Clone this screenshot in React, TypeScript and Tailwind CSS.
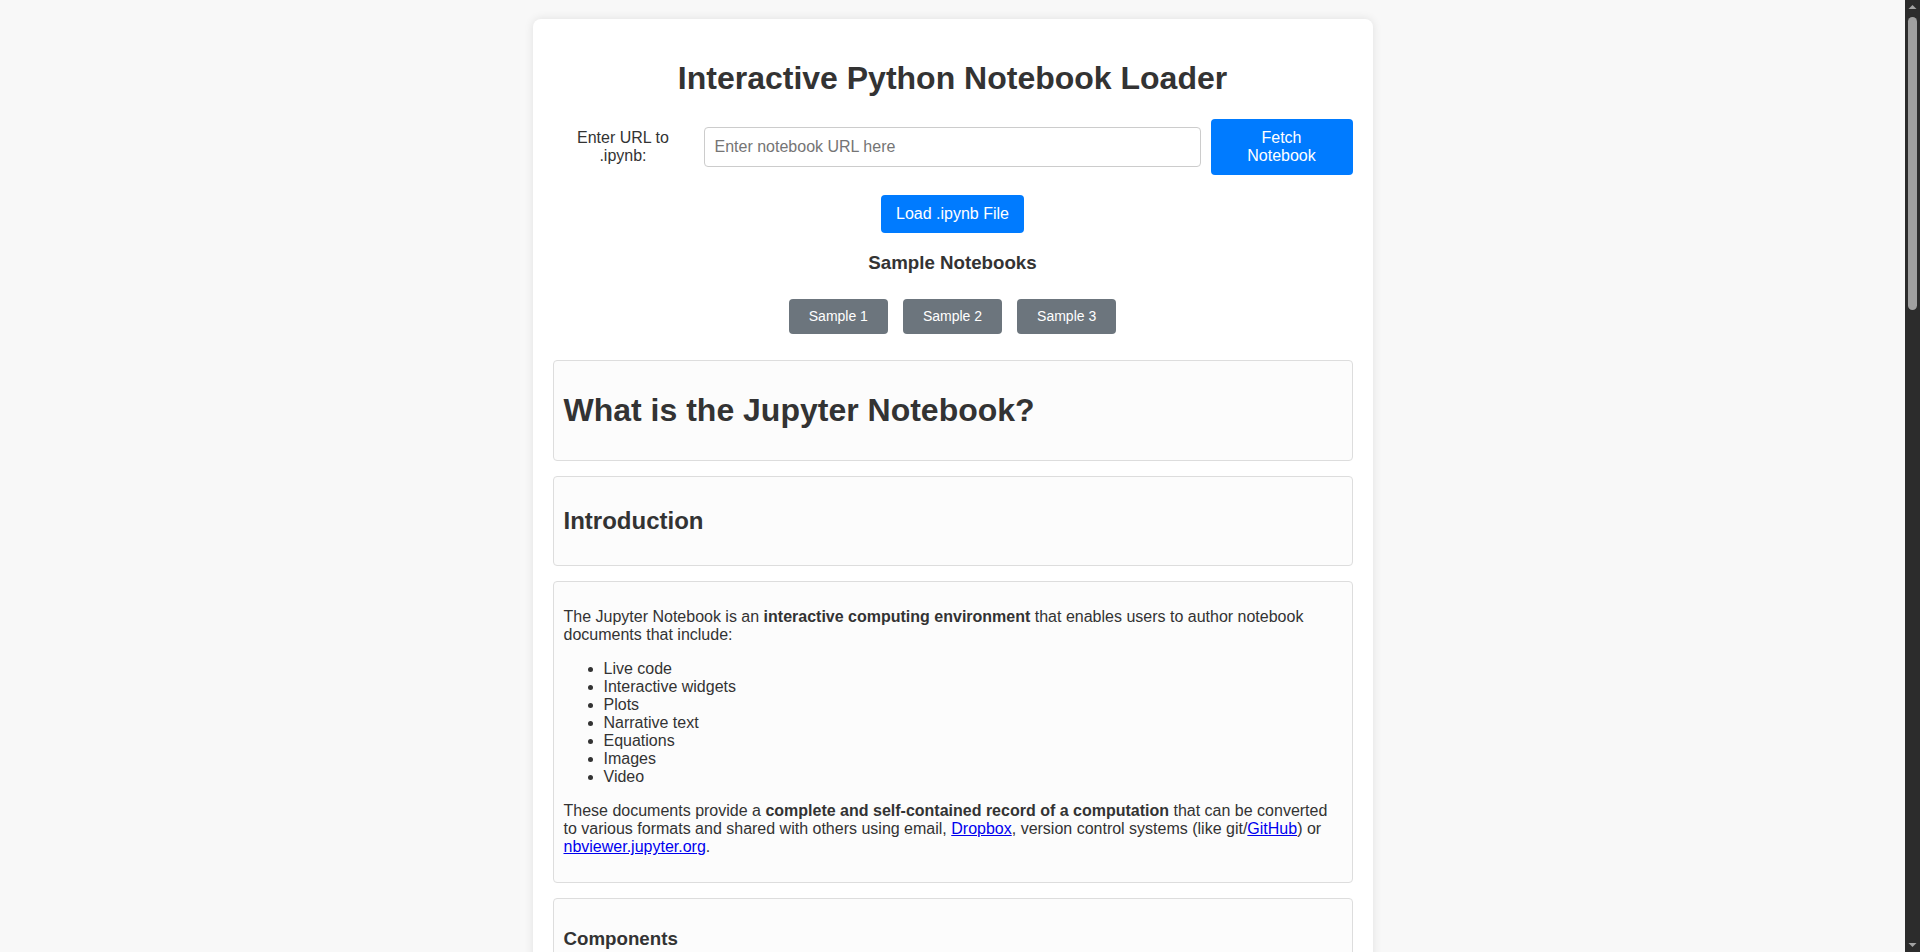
import React from "react";

// Sample notebooks listed under the loader
const samples = ["Sample 1", "Sample 2", "Sample 3"];

const features = [
  "Live code",
  "Interactive widgets",
  "Plots",
  "Narrative text",
  "Equations",
  "Images",
  "Video",
];

function Cell({ children }: { children: React.ReactNode }) {
  return (
    <div className="mb-[15px] rounded-[4px] border border-[#ddd] bg-[#fcfcfc] p-[10px]">
      {children}
    </div>
  );
}

function A({ children }: { children: React.ReactNode }) {
  return (
    <a href="#" className="text-[#0000ee] underline">
      {children}
    </a>
  );
}

// Dark browser scrollbar shown on the right edge of the page
function ScrollBar() {
  return (
    <div className="sticky top-0 flex h-screen w-[15px] shrink-0 flex-col items-center bg-[#2c2c2c]">
      <svg width="9" height="15" viewBox="0 0 9 15" className="shrink-0">
        <path d="M0.5 9 L4.5 5 L8.5 9 Z" fill="#a3a3a3" />
      </svg>
      <div className="mt-[2px] h-[293px] w-[9px] rounded-full bg-[#9f9f9f]" />
      <div className="flex-1" />
      <svg width="9" height="15" viewBox="0 0 9 15" className="shrink-0">
        <path d="M0.5 6 L4.5 10 L8.5 6 Z" fill="#a3a3a3" />
      </svg>
    </div>
  );
}

export default function App() {
  return (
    <div className="flex bg-[#f8f8f8] font-['Liberation_Sans',Arial,sans-serif] text-[16px] leading-[normal] text-[#333]">
      <div className="min-w-0 flex-1 pt-[19px] pb-5">
        <div className="mx-auto w-[840px] rounded-lg bg-white p-5 shadow-[0_0_10px_rgba(0,0,0,0.1)]">
          <h1 className="my-[21.44px] text-center text-[32px] font-bold">
            Interactive Python Notebook Loader
          </h1>

          {/* URL row */}
          <div className="flex items-center gap-[10px]">
            <label className="mx-[10px] w-[121px] shrink-0 text-center">
              Enter URL to .ipynb:
            </label>
            <input
              type="text"
              placeholder="Enter notebook URL here"
              className="h-[40px] min-w-0 flex-1 rounded-[4px] border border-[#ccc] px-[10px] outline-none placeholder:text-[#757575]"
            />
            <button className="w-[142px] shrink-0 rounded-[4px] bg-[#007bff] px-5 py-[10px] text-white">
              Fetch Notebook
            </button>
          </div>

          <div className="mt-5 flex justify-center">
            <button className="rounded-[4px] bg-[#007bff] px-[15.5px] py-[10px] text-white">
              Load .ipynb File
            </button>
          </div>

          <h3 className="mt-[18.72px] mb-[25px] text-center text-[18.72px] font-bold">
            Sample Notebooks
          </h3>

          <div className="flex justify-center gap-[15px]">
            {samples.map((s) => (
              <button
                key={s}
                className="rounded-[4px] bg-[#6c757d] px-5 py-[9.5px] text-[14px] text-white"
              >
                {s}
              </button>
            ))}
          </div>

          {/* Notebook cells */}
          <div className="mt-[26px]">
            <Cell>
              <h1 className="my-[21.44px] text-[32px] font-bold">What is the Jupyter Notebook?</h1>
            </Cell>
            <Cell>
              <h2 className="my-[19.92px] text-[24px] font-bold">Introduction</h2>
            </Cell>
            <Cell>
              <p className="my-4">
                The Jupyter Notebook is an <strong>interactive computing environment</strong> that
                enables users to author notebook documents that include:
              </p>
              <ul className="my-4 list-disc pl-10">
                {features.map((f) => (
                  <li key={f}>{f}</li>
                ))}
              </ul>
              <p className="my-4">
                These documents provide a{" "}
                <strong>complete and self-contained record of a computation</strong> that can be
                converted to various formats and shared with others using email, <A>Dropbox</A>,
                version control systems (like git/<A>GitHub</A>) or <A>nbviewer.jupyter.org</A>.
              </p>
            </Cell>
            <Cell>
              <h3 className="my-[18.72px] text-[18.72px] font-bold">Components</h3>
              <p className="my-4">The Jupyter Notebook combines three components:</p>
              <ul className="my-4 list-disc pl-10">
                <li>
                  <strong>The notebook web application</strong>: An interactive web application
                  for writing and running code interactively and authoring notebook documents.
                </li>
                <li>
                  <strong>Kernels</strong>: Separate processes started by the notebook web
                  application that runs users' code in a given language and returns output back to
                  the notebook web application. The kernel also handles things like computations
                  for interactive widgets, tab completion and introspection.
                </li>
                <li>
                  <strong>Notebook documents</strong>: Self-contained documents that contain a
                  representation of all content visible in the notebook web application, including
                  inputs and outputs of the computations, narrative text, equations, images, and
                  rich media representations of objects. Each notebook document has its own
                  kernel.
                </li>
              </ul>
            </Cell>
            <Cell>
              <h2 className="my-[19.92px] text-[24px] font-bold">Notebook web application</h2>
            </Cell>
            <Cell>
              <p className="my-4">The notebook web application enables users to:</p>
              <ul className="my-4 list-disc pl-10">
                <li>
                  <strong>Edit code in the browser</strong>, with automatic syntax highlighting,
                  indentation, and tab completion/introspection.
                </li>
                <li>
                  <strong>Run code from the browser</strong>, with the results of computations
                  attached to the code which generated them.
                </li>
                <li>
                  See the results of computations with{" "}
                  <strong>rich media representations</strong>, such as HTML, LaTeX, PNG, SVG, PDF,
                  etc.
                </li>
                <li>
                  Create and use <strong>interactive JavaScript widgets</strong>, which bind
                  interactive user interface controls and visualizations to reactive kernel side
                  computations.
                </li>
                <li>
                  Author <strong>narrative text</strong> using the <A>Markdown</A> markup language.
                </li>
                <li>
                  Include mathematical equations using <strong>LaTeX syntax in Markdown</strong>,
                  which are rendered in-browser by <A>MathJax</A>.
                </li>
              </ul>
            </Cell>
            <Cell>
              <h2 className="my-[19.92px] text-[24px] font-bold">Kernels</h2>
            </Cell>
            <Cell>
              <p className="my-4">
                Through Jupyter's kernel and messaging architecture, the Notebook allows code to be
                run in a range of different programming languages. For each notebook document that
                a user opens, the web application starts a kernel that runs the code for that
                notebook. Each kernel is capable of running code in a single programming language
                and there are kernels available in the following languages:
              </p>
              <ul className="my-4 list-disc pl-10">
                <li><A>Python</A></li>
                <li><A>Julia</A></li>
                <li><A>R</A></li>
                <li><A>Ruby</A></li>
                <li><A>Haskell</A></li>
                <li><A>Scala</A></li>
                <li><A>node.js</A></li>
                <li><A>Go</A></li>
              </ul>
              <p className="my-4">
                The default kernel runs Python code. The notebook provides a simple way for users
                to pick which of these kernels is used for a given notebook.
              </p>
              <p className="my-4">
                Each of these kernels communicate with the notebook web application and web browser
                using a JSON over ZeroMQ/WebSockets message protocol that is described{" "}
                <A>here</A>. Most users don't need to know about these details, but it helps to
                understand that "kernels run code."
              </p>
            </Cell>
            <Cell>
              <h2 className="my-[19.92px] text-[24px] font-bold">Notebook documents</h2>
            </Cell>
            <Cell>
              <p className="my-4">
                Notebook documents contain the <strong>inputs and outputs</strong> of an
                interactive session as well as <strong>narrative text</strong> that accompanies the
                code but is not meant for execution. <strong>Rich output</strong> generated by
                running code, including HTML, images, video, and plots, is embeddeed in the
                notebook, which makes it a complete and self-contained record of a computation.
              </p>
              <p className="my-4">
                When you run the notebook web application on your computer, notebook documents are
                just <strong>files on your local filesystem with a .ipynb extension</strong>. This
                allows you to use familiar workflows for organizing your notebooks into folders and
                sharing them with others.
              </p>
              <p className="my-4">
                Notebooks consist of a <strong>linear sequence of cells</strong>. There are four
                basic cell types:
              </p>
              <ul className="my-4 list-disc pl-10">
                <li>
                  <strong>Code cells:</strong> Input and output of live code that is run in the
                  kernel
                </li>
                <li>
                  <strong>Markdown cells:</strong> Narrative text with embedded LaTeX equations
                </li>
                <li>
                  <strong>Heading cells:</strong> 6 levels of hierarchical organization and
                  formatting
                </li>
                <li>
                  <strong>Raw cells:</strong> Unformatted text that is included, without
                  modification, when notebooks are converted to different formats using nbconvert
                </li>
              </ul>
              <p className="my-4">
                Internally, notebook documents are <strong>JSON</strong> data with{" "}
                <strong>binary values base64</strong> encoded. This allows them to be{" "}
                <strong>read and manipulated programmatically</strong> by any programming language.
              </p>
            </Cell>
          </div>
        </div>
      </div>
      <ScrollBar />
    </div>
  );
}
